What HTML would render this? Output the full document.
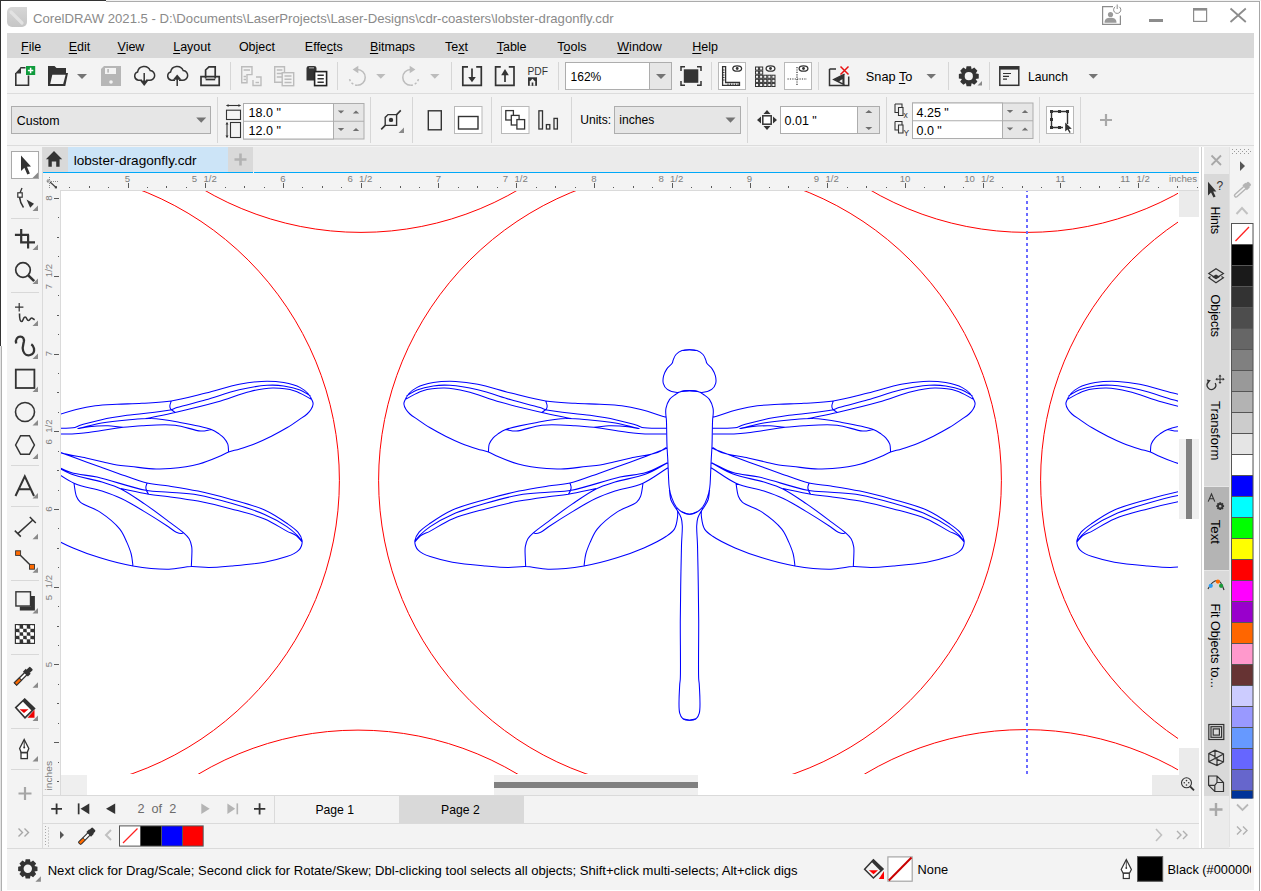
<!DOCTYPE html>
<html><head><meta charset="utf-8">
<style>
*{margin:0;padding:0;box-sizing:border-box}
html,body{width:1261px;height:891px;overflow:hidden;background:#fff;font-family:"Liberation Sans",sans-serif;font-size:13px;color:#000;position:relative}
.a{position:absolute}
.t{position:absolute;white-space:nowrap;line-height:1}
svg{position:absolute;overflow:visible}
.u{text-decoration:underline;text-underline-offset:1.5px;text-decoration-thickness:1px}
</style></head><body>
<div class="a" style="left:0px;top:0px;width:106px;height:1px;background:#333;"></div>
<div class="a" style="left:106px;top:0px;width:1155px;height:1px;background:#f2f2f2;"></div>
<div class="a" style="left:106px;top:1px;width:1154px;height:1px;background:#ababab;"></div>
<div class="a" style="left:0px;top:0px;width:1px;height:346px;background:#333;"></div>
<div class="a" style="left:0px;top:346px;width:1px;height:545px;background:#e4e4e4;"></div>
<div class="a" style="left:1px;top:346px;width:1px;height:545px;background:#b0b0b0;"></div>
<div class="a" style="left:1259px;top:1px;width:1px;height:890px;background:#a6a6a6;"></div>
<div class="t" style="left:33px;top:11.9px;font-size:13.15px;color:#8a8a8a;">CorelDRAW 2021.5 - D:\Documents\LaserProjects\Laser-Designs\cdr-coasters\lobster-dragonfly.cdr</div>
<div class="a" style="left:7px;top:33px;width:1247px;height:25px;background:#d8d8d8;"></div>
<div class="t" style="left:21.1px;top:40.6px;font-size:12.5px;color:#000;"><span class="u">F</span>ile</div>
<div class="t" style="left:68.7px;top:40.6px;font-size:12.5px;color:#000;"><span class="u">E</span>dit</div>
<div class="t" style="left:117.5px;top:40.6px;font-size:12.5px;color:#000;"><span class="u">V</span>iew</div>
<div class="t" style="left:173.2px;top:40.6px;font-size:12.5px;color:#000;"><span class="u">L</span>ayout</div>
<div class="t" style="left:238.9px;top:40.6px;font-size:12.5px;color:#000;">Ob<span class="u">j</span>ect</div>
<div class="t" style="left:304.8px;top:40.6px;font-size:12.5px;color:#000;">Effe<span class="u">c</span>ts</div>
<div class="t" style="left:369.9px;top:40.6px;font-size:12.5px;color:#000;"><span class="u">B</span>itmaps</div>
<div class="t" style="left:445px;top:40.6px;font-size:12.5px;color:#000;">Te<span class="u">x</span>t</div>
<div class="t" style="left:496.7px;top:40.6px;font-size:12.5px;color:#000;"><span class="u">T</span>able</div>
<div class="t" style="left:557.3px;top:40.6px;font-size:12.5px;color:#000;">T<span class="u">o</span>ols</div>
<div class="t" style="left:617.3px;top:40.6px;font-size:12.5px;color:#000;"><span class="u">W</span>indow</div>
<div class="t" style="left:692.3px;top:40.6px;font-size:12.5px;color:#000;"><span class="u">H</span>elp</div>
<div class="a" style="left:7px;top:58px;width:1247px;height:35px;background:#f3f3f3;"></div>
<div class="a" style="left:7px;top:93px;width:1247px;height:1px;background:#dcdcdc;"></div>
<div class="a" style="left:7px;top:94px;width:1247px;height:51px;background:#f3f3f3;"></div>
<div class="a" style="left:7px;top:145px;width:1247px;height:1px;background:#dcdcdc;"></div>
<div class="a" style="left:7px;top:146px;width:1247px;height:744px;background:#f3f3f3;"></div>
<div class="a" style="left:43px;top:147px;width:1156px;height:25px;background:#ebebeb;"></div>
<div class="a" style="left:43px;top:147px;width:25px;height:25px;background:#d9d9d9;"></div>
<div class="a" style="left:68px;top:147px;width:160px;height:25px;background:#cce4f7;"></div>
<div class="a" style="left:228px;top:147px;width:25px;height:25px;background:#d9d9d9;"></div>
<div class="a" style="left:43px;top:172px;width:1156px;height:1px;background:#00a8f8;"></div>
<div class="a" style="left:253px;top:172px;width:1px;height:1px;background:#f3f3f3;"></div>
<div class="a" style="left:42px;top:147px;width:1px;height:701px;background:#dadada;"></div>
<div class="a" style="left:43px;top:173px;width:1156px;height:17px;background:#f3f3f3;"></div>
<div class="a" style="left:43px;top:190px;width:1156px;height:1px;background:#dadada;"></div>
<div class="a" style="left:43px;top:173px;width:17px;height:622px;background:#f3f3f3;"></div>
<div class="a" style="left:60px;top:190px;width:1px;height:605px;background:#dadada;"></div>
<div class="a" style="left:61px;top:191px;width:1138px;height:604px;background:#fff;"></div>
<div class="a" style="left:1179px;top:191px;width:20px;height:26px;background:#ebebeb;"></div>
<div class="a" style="left:1179px;top:748px;width:20px;height:47px;background:#ebebeb;"></div>
<div class="a" style="left:1152px;top:775px;width:47px;height:20px;background:#ebebeb;"></div>
<div class="a" style="left:61px;top:775px;width:26px;height:20px;background:#efefef;"></div>
<div class="a" style="left:494px;top:775px;width:204px;height:20px;background:#efefef;"></div>
<div class="a" style="left:494px;top:782px;width:204px;height:6px;background:#808080;"></div>
<div class="a" style="left:1179px;top:439px;width:20px;height:80px;background:#efefef;"></div>
<div class="a" style="left:1186px;top:439px;width:6px;height:80px;background:#808080;"></div>
<div class="a" style="left:1199px;top:147px;width:5px;height:701px;background:#ffffff;"></div>
<div class="a" style="left:1201px;top:147px;width:1px;height:701px;background:#d0d0d0;"></div>
<div class="a" style="left:1204px;top:147px;width:25px;height:27px;background:#ebebeb;"></div>
<div class="a" style="left:1204px;top:174px;width:25px;height:622px;background:#d9d9d9;"></div>
<div class="a" style="left:1204px;top:487px;width:25px;height:83px;background:#b4b4b4;"></div>
<div class="a" style="left:1229px;top:147px;width:1px;height:700px;background:#e2e2e2;"></div>
<div class="a" style="left:43px;top:795px;width:1156px;height:1px;background:#dadada;"></div>
<div class="a" style="left:43px;top:796px;width:1156px;height:27px;background:#f3f3f3;"></div>
<div class="a" style="left:399px;top:796px;width:125px;height:27px;background:#d9d9d9;"></div>
<div class="a" style="left:274px;top:796px;width:1px;height:27px;background:#dadada;"></div>
<div class="a" style="left:43px;top:823px;width:1156px;height:1px;background:#dadada;"></div>
<div class="a" style="left:7px;top:848px;width:1247px;height:1px;background:#dadada;"></div>
<div class="a" style="left:1204px;top:796px;width:25px;height:52px;background:#ebebeb;"></div>
<div class="a" style="left:1230px;top:147px;width:24px;height:701px;background:#f3f3f3;"></div>
<div class="a" style="left:1204px;top:486px;width:25px;height:1px;background:#e6e6e6;"></div>
<div class="a" style="left:1204px;top:570px;width:25px;height:1px;background:#e6e6e6;"></div>
<!-- canvas -->

<svg width="1261" height="891" style="left:0;top:0" viewBox="0 0 1261 891">
<defs><clipPath id="cv"><rect x="61" y="191" width="1117" height="583"/></clipPath>
<g id="half"><path d="M696.0,350.6C693.8,350.3 691.7,349.8 689.5,349.8C687.1,349.8 684.3,349.8 682.0,350.6C679.8,351.4 677.5,352.9 676.0,354.5C674.6,356.0 673.8,358.4 673.2,360.0C672.7,361.1 672.9,361.9 672.3,363.0C671.3,364.8 668.2,366.9 666.7,369.1C665.3,371.2 664.2,373.5 663.6,375.9C663.0,378.3 662.7,381.0 663.3,383.3C663.9,385.5 665.3,387.9 667.3,389.4C669.7,391.2 674.3,392.3 677.2,392.4C679.4,392.5 681.0,391.3 683.0,391.0C685.1,390.7 687.3,390.6 689.5,390.6C691.7,390.6 693.8,390.9 696.0,391.0 M698.0,391.5C695.2,391.2 692.3,390.6 689.5,390.6C686.7,390.6 683.5,390.7 681.0,391.5C678.7,392.2 676.6,393.7 674.7,395.0C672.8,396.3 671.0,397.5 669.6,399.4C668.0,401.7 666.6,405.4 666.0,408.1C665.5,410.2 665.7,412.0 665.8,414.0C665.9,416.0 666.3,417.7 666.4,420.0C666.6,423.2 666.6,427.4 666.7,431.5C666.8,436.1 666.8,441.3 667.0,446.1C667.2,450.8 667.6,455.2 667.8,460.0C668.1,465.1 668.2,471.1 668.5,476.0C668.7,480.3 668.7,484.2 669.3,488.0C669.8,491.4 670.6,494.5 671.7,497.6C672.8,500.7 674.2,504.0 676.0,506.5C677.7,508.7 679.7,510.7 682.0,512.0C684.2,513.3 687.0,514.2 689.5,514.2C692.0,514.2 694.5,512.7 697.0,512.0 M669.4,490.0C669.9,493.2 669.9,496.6 670.8,499.5C671.6,502.1 673.2,504.4 674.5,506.5C675.6,508.3 676.9,509.7 678.0,511.5C679.2,513.5 680.5,515.7 681.2,518.0C682.0,520.5 682.1,522.8 682.3,526.0C682.5,531.0 681.7,537.7 681.5,545.0C681.2,554.9 681.0,567.9 680.8,580.0C680.6,592.9 680.4,605.4 680.3,620.0C680.2,637.8 680.8,669.5 680.3,679.0C680.1,682.0 679.8,682.3 679.7,685.0C679.4,690.9 678.2,707.5 679.7,713.2C680.4,715.9 681.4,717.6 683.0,718.8C684.6,720.0 687.3,720.2 689.5,720.2C691.7,720.2 693.8,719.3 696.0,718.8 M666.1,417.2C657.7,414.7 648.7,411.6 640.8,409.6C634.0,407.9 628.3,406.7 621.7,405.8C614.7,404.9 607.5,404.7 600.0,404.3C592.0,403.9 583.8,403.8 575.2,403.3C565.8,402.7 555.9,402.5 545.7,401.0C534.6,399.3 522.5,395.9 511.1,393.1C499.9,390.3 487.8,386.2 477.8,384.2C469.7,382.6 463.0,381.7 455.6,381.4C448.2,381.1 440.1,381.4 433.3,382.6C427.3,383.7 421.0,385.4 416.7,387.6C413.5,389.3 411.0,391.2 409.0,393.5C407.1,395.7 405.4,399.0 404.6,401.0C404.1,402.2 403.8,402.9 403.9,404.0C404.0,405.5 404.9,407.7 405.9,409.3C406.9,411.0 408.2,412.5 409.9,414.0C412.0,415.9 414.9,417.6 417.8,419.6C421.3,422.0 425.4,424.9 429.7,427.5C434.6,430.4 440.3,433.5 445.6,436.2C450.8,438.8 456.1,441.3 461.4,443.4C466.6,445.5 472.5,447.4 477.3,448.9C481.3,450.2 484.9,450.8 488.4,452.1C491.8,453.3 494.2,454.9 498.0,456.5C503.4,458.8 510.7,462.0 518.1,464.0C526.7,466.3 538.8,467.9 546.7,468.6C552.3,469.1 555.6,469.2 561.0,469.0C568.2,468.8 578.9,467.3 586.0,466.6C591.4,466.0 595.5,465.8 600.1,465.0C604.7,464.2 609.0,463.0 613.8,461.9C619.2,460.7 624.6,459.4 631.0,458.0C638.9,456.3 651.2,454.8 657.5,452.4C661.4,451.0 663.4,449.1 666.3,447.5 M666.1,428.3C658.1,428.0 646.8,428.5 642.0,427.4C639.9,426.9 639.7,426.2 637.6,425.5C633.1,423.9 623.1,421.4 615.4,419.7C607.3,417.9 599.6,416.7 590.0,415.3C577.5,413.5 554.7,411.9 546.7,410.0C543.5,409.2 543.1,408.5 540.1,407.6C533.9,405.6 521.1,402.6 511.1,399.8C500.4,396.7 488.5,392.3 477.8,389.8C468.2,387.6 458.1,385.8 450.0,385.3C443.7,384.9 438.8,385.1 433.3,385.9C427.8,386.7 421.7,388.1 417.0,390.0C413.0,391.6 410.0,394.0 406.5,396.0 M406.0,399.0C411.4,396.3 416.2,392.7 422.2,390.9C428.9,388.9 437.0,388.0 444.4,388.1C451.8,388.2 458.6,389.5 466.7,391.4C476.8,393.7 488.2,398.7 500.0,402.0C513.1,405.7 529.1,409.5 541.9,412.4C552.6,414.8 561.6,416.5 571.4,418.6 M545.7,401.0C546.2,402.5 547.0,404.1 547.1,405.5C547.2,406.6 547.1,407.7 546.5,408.7C545.7,410.0 543.4,411.2 541.9,412.4 M488.4,452.1C488.7,449.5 488.4,446.6 489.2,444.2C490.0,441.9 491.6,439.6 493.2,437.8C494.6,436.2 496.2,435.2 498.0,433.9C500.2,432.4 502.1,430.9 505.7,429.5C512.5,426.9 526.8,424.2 537.1,422.4C546.8,420.7 556.5,418.9 565.7,418.6C574.1,418.3 581.8,419.4 590.0,420.1C598.4,420.8 607.6,421.7 615.4,423.0C622.2,424.2 630.1,426.4 634.4,427.4C636.6,427.9 637.8,428.2 639.5,428.6 M505.7,429.5C509.2,430.0 511.9,431.2 516.2,431.0C522.9,430.7 532.7,426.2 541.9,425.2C552.2,424.1 565.7,425.2 575.2,425.7C582.3,426.0 587.9,427.2 593.8,427.2C599.1,427.2 603.6,425.9 609.0,425.8C615.0,425.7 622.5,426.1 628.0,426.7C632.3,427.2 635.7,428.0 639.5,428.6 M593.8,427.2C601.0,428.3 608.6,429.5 615.4,430.5C621.6,431.4 627.8,432.5 633.1,433.1C637.4,433.6 640.5,433.8 645.0,434.0C651.0,434.2 659.1,434.0 666.1,434.0 M667.0,448.0C665.1,448.9 663.8,449.6 661.2,450.6C656.4,452.6 647.3,455.8 640.0,458.5C632.2,461.4 623.0,464.7 615.8,467.3C610.0,469.4 606.2,470.8 600.1,472.9C591.7,475.8 579.3,480.9 570.0,483.1C562.2,484.9 555.8,484.9 548.0,486.1C539.0,487.5 529.0,489.0 519.0,491.1C508.2,493.4 496.8,496.3 485.7,499.4C474.5,502.6 462.2,505.6 452.4,510.0C444.0,513.8 436.2,519.1 430.2,523.3C425.7,526.4 421.7,529.0 419.1,532.2C417.0,534.8 415.3,538.0 414.9,540.5C414.6,542.5 415.0,544.3 415.6,546.0C416.2,547.6 417.0,549.0 418.2,550.2C419.5,551.5 421.2,552.6 423.0,553.6C425.1,554.8 427.1,555.6 430.2,556.6C435.5,558.4 444.2,560.7 452.4,562.2C462.3,564.0 475.7,565.1 485.7,566.0C493.8,566.7 500.9,567.4 507.9,567.5C514.2,567.6 519.4,566.4 525.7,566.6C532.7,566.8 539.7,569.2 548.0,569.3C558.6,569.5 572.3,568.0 584.0,566.0C595.3,564.1 606.6,561.0 616.9,557.8C626.4,554.9 635.4,551.7 643.9,548.0C651.8,544.5 660.9,540.1 666.3,536.3C669.9,533.8 672.5,532.1 674.4,529.1C676.4,525.9 677.1,520.7 677.5,517.4C677.8,515.0 677.9,512.9 677.5,511.2C677.2,509.9 676.5,509.1 676.0,508.0 M667.3,462.7C660.2,466.0 653.6,470.2 646.0,472.6C637.9,475.1 629.9,474.9 620.0,477.1C606.3,480.1 584.9,487.8 571.5,490.2C562.3,491.8 556.2,491.5 548.0,492.2C538.8,493.0 528.9,493.3 519.0,495.0C508.2,496.9 496.7,500.1 485.7,503.3C474.5,506.5 462.2,510.1 452.4,514.4C444.1,518.0 436.0,522.6 430.2,526.6C426.0,529.5 422.6,532.4 420.0,535.0C418.1,536.9 417.0,538.7 415.5,540.5 M415.2,541.6C417.0,539.7 418.3,537.5 420.5,535.8C423.1,533.9 426.3,533.1 430.2,531.1C436.1,528.0 444.0,522.4 452.4,518.9C462.2,514.8 474.6,511.9 485.7,508.9C496.8,505.9 508.2,503.2 519.0,501.1C529.0,499.2 539.2,497.9 548.0,496.7C555.4,495.7 561.1,495.4 568.4,494.2C577.0,492.8 586.9,490.5 596.1,488.6 M570.0,483.1C570.4,484.4 571.0,485.7 571.1,487.0C571.2,488.2 570.9,489.4 570.5,490.5C570.1,491.8 569.1,493.0 568.4,494.2 M667.3,463.0C660.2,466.7 654.0,471.0 646.0,474.0C636.8,477.5 624.0,479.3 615.0,482.1C608.0,484.3 602.9,485.6 596.5,488.7C588.7,492.5 580.1,498.7 572.1,504.1C564.1,509.5 555.5,516.1 548.6,521.3C543.0,525.5 537.3,529.3 533.6,532.7C531.1,534.9 529.3,536.5 527.9,538.8C526.5,541.1 525.8,543.8 525.3,546.6C524.8,549.6 525.1,552.8 525.2,556.0C525.3,559.4 525.5,563.1 525.7,566.6 M667.9,467.8C659.6,472.9 651.8,479.3 643.0,483.2C634.2,487.1 623.4,488.3 615.0,491.1C607.9,493.5 602.3,495.5 595.7,498.6C588.1,502.2 579.9,507.2 572.1,511.9C564.2,516.6 554.3,523.0 548.6,526.8C545.2,529.0 543.2,531.2 540.7,532.3C538.8,533.1 536.5,533.7 535.2,533.5C534.5,533.4 534.1,533.0 533.6,532.7 M643.0,483.5C642.2,487.8 641.9,493.2 640.5,496.5C639.5,498.9 638.8,500.3 636.7,502.2C632.9,505.6 623.2,507.9 616.9,512.1C610.0,516.7 601.8,523.3 597.2,529.1C593.7,533.5 592.0,538.2 590.0,542.6C588.3,546.5 586.8,550.1 585.8,554.0C584.8,557.9 584.6,562.0 584.0,566.0"/></g>
<g id="df"><use href="#half"/><use href="#half" transform="matrix(-1,0,0,1,1379,0)"/></g></defs>
<g clip-path="url(#cv)">
<g fill="none" stroke="#ff0000" stroke-width="1">
<circle cx="690" cy="480.3" r="311.4"/><circle cx="28" cy="480.3" r="311.4"/><circle cx="1352" cy="480.3" r="311.4"/>
<circle cx="361" cy="-79" r="311.4"/><circle cx="1027" cy="-79" r="311.4"/>
<circle cx="358" cy="1041.5" r="311.4"/><circle cx="1025" cy="1041" r="311.4"/>
</g>
<g fill="none" stroke="#0000ff" stroke-width="1.05">
<use href="#df"/><use href="#df" transform="translate(-662,0)"/><use href="#df" transform="translate(662,0)"/>
</g>
<line x1="1027" y1="189" x2="1027" y2="774" stroke="#6b6bff" stroke-width="2" stroke-dasharray="3 3"/>
</g>
</svg>
<svg width="1261" height="891" style="left:0;top:0" viewBox="0 0 1261 891"><defs><linearGradient id="gi" x1="0" y1="0" x2="0" y2="1"><stop offset="0" stop-color="#d6d6d6"/><stop offset="1" stop-color="#c6c6c6"/></linearGradient></defs>
<path d="M12,7 H27 V22 A5,5 0 0 1 22,27 H12 A5,5 0 0 1 7,22 V12 A5,5 0 0 1 12,7 Z" fill="url(#gi)"/>
<path d="M11,12 L22,23" stroke="#e2e2e2" stroke-width="3.2" stroke-linecap="round"/>
<g stroke="#8c8c8c" fill="none" stroke-width="1.2"><path d="M1113,6.6 H1102.6 V24.4 H1120.4 V15.5"/><path d="M1115.2,6.8 A3.6,3.6 0 1 0 1119.2,6.8" stroke-width="1"/><path d="M1117.2,4.5 V9" stroke-width="1"/></g>
<circle cx="1110.5" cy="14.5" r="2.6" fill="#9a9a9a"/><path d="M1104.5,22.8 C1104.5,19 1107,17.8 1110.5,17.8 C1114,17.8 1116.5,19 1116.5,22.8 Z" fill="#9a9a9a"/>
<rect x="1149" y="19" width="14" height="3" fill="#8c8c8c"/>
<rect x="1193.6" y="8.6" width="13" height="12.8" fill="none" stroke="#8c8c8c" stroke-width="1.2"/><rect x="1193" y="8" width="14" height="2.6" fill="#8c8c8c"/>
<path d="M1230.5,8.5 L1245.8,22 M1245.8,8.5 L1230.5,22" stroke="#8c8c8c" stroke-width="1.8"/>
<g fill="none" stroke="#333" stroke-width="1.6"><path d="M15.8,73 V85.2 H28.5 V75.5 M20.5,67.8 H25.5"/></g>
<path d="M15,73.5 L21,67 L21,73.5 Z" fill="#333"/>
<rect x="26" y="66" width="9.2" height="9" fill="#0f9b3c"/><path d="M30.6,67.8 V73.2 M27.9,70.5 H33.3" stroke="#fff" stroke-width="1.5"/>
<path d="M48,66 H54.5 L56.5,68 H66 V73 H68 L65.3,86 H48 Z" fill="#333"/>
<path d="M52.3,74.8 H65.6 L63.2,84 H50.2 Z" fill="#f3f3f3"/>
<path d="M77,74 H87 L82,79 Z" fill="#747474"/>
<path d="M104,66 H121 V86 H101 V69 Z" fill="#b6b6b6"/><rect x="105" y="68" width="11" height="6" fill="#f3f3f3"/><rect x="107.3" y="69" width="1.6" height="3.6" fill="#b6b6b6"/><circle cx="111" cy="82" r="1.8" fill="#f3f3f3"/>
<g fill="none" stroke="#333" stroke-width="1.5"><path d="M142,80.3 H138.3 A4.3,4.3 0 0 1 137.6,72 A6.6,6.6 0 0 1 150.2,70.5 A4.6,4.6 0 0 1 149.3,80.3 H146"/><path d="M175,80.3 H171.3 A4.3,4.3 0 0 1 170.6,72 A6.6,6.6 0 0 1 183.2,70.5 A4.6,4.6 0 0 1 182.3,80.3 H179"/><path d="M144.2,73 V82"/><path d="M177.2,77 V86"/></g>
<path d="M140,80.5 H148.4 L144.2,86 Z" fill="#333"/><path d="M172.8,79.8 H181.6 L177.2,74.5 Z" fill="#333"/>
<g fill="none" stroke="#333" stroke-width="1.7"><path d="M201,76.7 H219.2 V85.3 H201 Z"/><path d="M205.6,78.5 V70 L209,66.8 H215.2 V78.5"/><path d="M205.6,79.5 H215.2"/></g>
<rect x="230" y="62" width="1" height="28" fill="#d6d6d6"/>
<rect x="337" y="62" width="1" height="28" fill="#d6d6d6"/>
<rect x="451" y="62" width="1" height="28" fill="#d6d6d6"/>
<rect x="558" y="62" width="1" height="28" fill="#d6d6d6"/>
<rect x="711" y="62" width="1" height="28" fill="#d6d6d6"/>
<rect x="818" y="62" width="1" height="28" fill="#d6d6d6"/>
<rect x="948" y="62" width="1" height="28" fill="#d6d6d6"/>
<rect x="989" y="62" width="1" height="28" fill="#d6d6d6"/>
<g fill="none" stroke="#bcbcbc" stroke-width="1.4"><path d="M241.7,66.7 H252 V74.6 H247 V82.8 H241.7 Z"/><path d="M243.6,70 H250 M243.6,76.5 H246 M243.6,79.5 H246"/><path d="M253,80 V85.5 H261 V77 H256"/><path d="M255.5,82.5 H259"/><path d="M274.7,66.7 H284.5 V82.3 H274.7 Z"/><path d="M276.8,70 H282.4 M276.8,73.5 H282.4 M276.8,77 H282.4"/><rect x="282.2" y="72.7" width="11.5" height="13" fill="#f3f3f3"/><path d="M284.5,76 H291.5 M284.5,79.3 H291.5 M284.5,82.5 H291.5"/></g>
<path d="M306.5,68 Q306.5,66 309,66 H314 Q316.5,66 316.5,68 V80.5 H306.5 Z" fill="#333"/><rect x="309" y="67" width="5" height="1.6" fill="#888"/>
<rect x="314.6" y="71.6" width="12" height="14" fill="#fff" stroke="#222" stroke-width="1.6"/><path d="M317.5,75.2 H323.8 M317.5,78.7 H323.8 M317.5,82.2 H323.8" stroke="#333" stroke-width="1.6"/>
<g fill="none" stroke="#bcbcbc" stroke-width="1.5"><path d="M357.3,69.5 A7.9,7.9 0 0 1 357.3,85.3"/><path d="M357.3,85.3 A7.9,7.9 0 0 1 349.4,77.4" stroke-dasharray="2.2 2"/><path d="M410.7,69.5 A7.9,7.9 0 0 0 410.7,85.3"/><path d="M410.7,85.3 A7.9,7.9 0 0 0 418.6,77.4" stroke-dasharray="2.2 2"/></g>
<path d="M358.3,65.8 V73.2 L352.6,69.5 Z" fill="#bcbcbc"/><path d="M409.7,65.8 V73.2 L415.4,69.5 Z" fill="#bcbcbc"/>
<path d="M376.2,74 H385.5 L380.8,78.8 Z" fill="#bcbcbc"/><path d="M430.2,74 H439.5 L434.8,78.8 Z" fill="#bcbcbc"/>
<g fill="none" stroke="#333" stroke-width="1.7"><path d="M468,66.8 H462.8 V85.3 H481.3 V66.8 H476.2"/><path d="M472,68.5 V78"/><path d="M500.8,66.8 H495.6 V85.3 H514 V66.8 H508.8"/><path d="M505,75 V82"/></g>
<path d="M468.2,77 H475.8 L472,82.3 Z" fill="#333"/><path d="M501.2,75.3 H508.8 L505,69 Z" fill="#333"/>
<text x="527.5" y="74.8" font-family="Liberation Sans" font-size="10.6" fill="#333" textLength="20.5" lengthAdjust="spacingAndGlyphs">PDF</text>
<rect x="528" y="77.3" width="9" height="8.5" fill="#333"/><path d="M529.8,81.5 L532.5,78.8 L535.2,81.5 V85.8 H529.8 Z" fill="#f3f3f3"/><rect x="531.7" y="82.5" width="1.6" height="3.3" fill="#333"/>
<rect x="565.5" y="62.5" width="106" height="27" fill="#fff" stroke="#adadad"/><rect x="649.5" y="62.5" width="22" height="27" fill="#e6e6e6" stroke="#adadad"/><path d="M656,74 H666 L661,79 Z" fill="#747474"/>
<g fill="none" stroke="#333" stroke-width="1.5"><path d="M681,71 V66.8 H685 M697,66.8 H701 V71 M701,81 V85.2 H697 M685,85.2 H681 V81"/></g><rect x="683.8" y="69.3" width="14.5" height="13.5" fill="#333"/>
<rect x="718.5" y="62.5" width="27" height="27" fill="#fff" stroke="#b9b9b9"/><rect x="784.5" y="62.5" width="27" height="27" fill="#fff" stroke="#b9b9b9"/>
<path d="M722.6,66.6 H725.6 V82.5 H739.5 V85.4 H722.6 Z" fill="none" stroke="#333" stroke-width="1.3"/>
<path d="M723,70 H724.5 M723,72.5 H724.5 M723,75 H724.5 M723,77.5 H724.5 M723,80 H724.5 M728,85 V83.5 M730.5,85 V83.5 M733,85 V83.5 M735.5,85 V83.5 M738,85 V83.5" stroke="#333" stroke-width="0.9"/>
<ellipse cx="737.2" cy="68.5" rx="4.4" ry="2.7" fill="#fff" stroke="#333" stroke-width="1.3"/><circle cx="737.2" cy="68.5" r="1.4" fill="#333"/>
<g fill="#333"><rect x="755.0" y="66.5" width="4.1" height="4.1"/><rect x="759.1" y="66.5" width="4.1" height="4.1"/><rect x="755.0" y="70.6" width="4.1" height="4.1"/><rect x="759.1" y="70.6" width="4.1" height="4.1"/><rect x="755.0" y="74.7" width="4.1" height="4.1"/><rect x="759.1" y="74.7" width="4.1" height="4.1"/><rect x="763.2" y="74.7" width="4.1" height="4.1"/><rect x="767.3" y="74.7" width="4.1" height="4.1"/><rect x="771.4" y="74.7" width="4.1" height="4.1"/><rect x="755.0" y="78.8" width="4.1" height="4.1"/><rect x="759.1" y="78.8" width="4.1" height="4.1"/><rect x="763.2" y="78.8" width="4.1" height="4.1"/><rect x="767.3" y="78.8" width="4.1" height="4.1"/><rect x="771.4" y="78.8" width="4.1" height="4.1"/><rect x="755.0" y="82.9" width="4.1" height="4.1"/><rect x="759.1" y="82.9" width="4.1" height="4.1"/><rect x="763.2" y="82.9" width="4.1" height="4.1"/><rect x="767.3" y="82.9" width="4.1" height="4.1"/><rect x="771.4" y="82.9" width="4.1" height="4.1"/></g>
<g fill="#f3f3f3"><rect x="756.0" y="67.5" width="2.1" height="2.1"/><rect x="760.1" y="67.5" width="2.1" height="2.1"/><rect x="756.0" y="71.6" width="2.1" height="2.1"/><rect x="760.1" y="71.6" width="2.1" height="2.1"/><rect x="756.0" y="75.7" width="2.1" height="2.1"/><rect x="760.1" y="75.7" width="2.1" height="2.1"/><rect x="764.2" y="75.7" width="2.1" height="2.1"/><rect x="768.3" y="75.7" width="2.1" height="2.1"/><rect x="772.4" y="75.7" width="2.1" height="2.1"/><rect x="756.0" y="79.8" width="2.1" height="2.1"/><rect x="760.1" y="79.8" width="2.1" height="2.1"/><rect x="764.2" y="79.8" width="2.1" height="2.1"/><rect x="768.3" y="79.8" width="2.1" height="2.1"/><rect x="772.4" y="79.8" width="2.1" height="2.1"/><rect x="756.0" y="83.9" width="2.1" height="2.1"/><rect x="760.1" y="83.9" width="2.1" height="2.1"/><rect x="764.2" y="83.9" width="2.1" height="2.1"/><rect x="768.3" y="83.9" width="2.1" height="2.1"/><rect x="772.4" y="83.9" width="2.1" height="2.1"/></g>
<ellipse cx="770.5" cy="68.5" rx="4.4" ry="2.7" fill="#fff" stroke="#333" stroke-width="1.3"/><circle cx="770.5" cy="68.5" r="1.4" fill="#333"/>
<path d="M797,67 V86 M787.5,79 H807" stroke="#333" stroke-width="1.2" stroke-dasharray="1.2 1.2"/>
<ellipse cx="803.5" cy="68.5" rx="4.4" ry="2.7" fill="#fff" stroke="#333" stroke-width="1.3"/><circle cx="803.5" cy="68.5" r="1.4" fill="#333"/>
<path d="M829.5,69 V85.5 H848.7 V76.5 M829.5,69 H836" fill="none" stroke="#333" stroke-width="1.5"/><path d="M844.5,74 L833.5,79.5 L844.5,85 M843,78 V84 L838,81.3 Z" fill="#333" stroke="#333" stroke-width="1.2"/>
<path d="M840.5,66.5 L848.5,74.5 M848.5,66.5 L840.5,74.5" stroke="#e81010" stroke-width="1.5"/>
<path d="M926.5,74 H936 L931.2,78.8 Z" fill="#747474"/>
<path d="M978.75,73.97 L978.75,78.43 L975.62,79.08 L975.66,78.98 L977.41,81.66 L974.26,84.81 L971.58,83.06 L971.68,83.02 L971.03,86.15 L966.57,86.15 L965.92,83.02 L966.02,83.06 L963.34,84.81 L960.19,81.66 L961.94,78.98 L961.98,79.08 L958.85,78.43 L958.85,73.97 L961.98,73.32 L961.94,73.42 L960.19,70.74 L963.34,67.59 L966.02,69.34 L965.92,69.38 L966.57,66.25 L971.03,66.25 L971.68,69.38 L971.58,69.34 L974.26,67.59 L977.41,70.74 L975.66,73.42 L975.62,73.32Z M972.9,76.2 A4.1,4.1 0 1 0 964.6999999999999,76.2 A4.1,4.1 0 1 0 972.9,76.2Z" fill="#333" fill-rule="evenodd"/>
<path d="M982,85.5 H977.5 L982,81 Z" fill="#8a8a8a"/>
<rect x="999.8" y="66.8" width="19" height="18.5" fill="none" stroke="#333" stroke-width="1.5"/><rect x="999.8" y="66.8" width="19" height="2.8" fill="#333"/><path d="M1003,73.5 H1011 M1003,76.3 H1009 M1003,79.2 H1007" stroke="#333" stroke-width="1.2"/>
<path d="M1088.6,74 H1098 L1093.3,78.8 Z" fill="#747474"/>
<rect x="11.5" y="106.5" width="199" height="27" fill="#e6e6e6" stroke="#adadad"/><path d="M196.2,117.6 H206.2 L201.2,122.8 Z" fill="#747474"/>
<rect x="217" y="97" width="1" height="46" fill="#d6d6d6"/>
<rect x="370" y="97" width="1" height="46" fill="#d6d6d6"/>
<rect x="412" y="97" width="1" height="46" fill="#d6d6d6"/>
<rect x="491" y="97" width="1" height="46" fill="#d6d6d6"/>
<rect x="571" y="97" width="1" height="46" fill="#d6d6d6"/>
<rect x="747" y="97" width="1" height="46" fill="#d6d6d6"/>
<rect x="886" y="97" width="1" height="46" fill="#d6d6d6"/>
<rect x="1039" y="97" width="1" height="46" fill="#d6d6d6"/>
<rect x="1080" y="97" width="1" height="46" fill="#d6d6d6"/>
<g fill="none" stroke="#333" stroke-width="1.1"><rect x="226.5" y="110.2" width="14" height="9.3"/><path d="M226.5,105.5 H240.5"/><rect x="230.5" y="122.5" width="10" height="15"/><path d="M227,122.5 V137.5"/></g>
<path d="M226.3,105.5 L228.5,104 V107 Z M240.7,105.5 L238.5,104 V107 Z M227,122.3 L225.5,124.5 H228.5 Z M227,137.7 L225.5,135.5 H228.5 Z" fill="#333"/>
<rect x="243.5" y="103.5" width="120.5" height="35.5" fill="#e6e6e6" stroke="#adadad"/><rect x="243.5" y="103.5" width="90" height="35.5" fill="#fff" stroke="#adadad"/><path d="M243.5,121.25 H364.0" stroke="#adadad"/><path d="M337.8,110.5 H344.2 L341,113.5 Z M352.8,113.5 H359.2 L356,110.5 Z" fill="#707070"/><path d="M337.8,128.0 H344.2 L341,131.0 Z M352.8,131.0 H359.2 L356,128.0 Z" fill="#707070"/>
<rect x="912.5" y="103.0" width="120.5" height="35.5" fill="#e6e6e6" stroke="#adadad"/><rect x="912.5" y="103.0" width="90" height="35.5" fill="#fff" stroke="#adadad"/><path d="M912.5,120.75 H1033.0" stroke="#adadad"/><path d="M1006.8,110.0 H1013.2 L1010,113.0 Z M1021.8,113.0 H1028.2 L1025,110.0 Z" fill="#707070"/><path d="M1006.8,127.5 H1013.2 L1010,130.5 Z M1021.8,130.5 H1028.2 L1025,127.5 Z" fill="#707070"/>
<path d="M388,114.6 H396.6 V125.4 H385.2 V117.4 Z" fill="none" stroke="#333" stroke-width="1.4"/><circle cx="391" cy="119.9" r="2.2" fill="#333"/><path d="M381.2,129.4 L385.2,125.4 M396.6,114.6 L400.8,110.4" stroke="#333" stroke-width="1.6"/><path d="M404,127.5 V133 H398.5 Z" fill="#8a8a8a"/>
<rect x="428.3" y="110.8" width="13" height="19" fill="none" stroke="#333" stroke-width="1.4"/>
<rect x="454.5" y="106.5" width="27.5" height="27" fill="#fff" stroke="#b9b9b9"/><rect x="501.5" y="106.5" width="27.5" height="27" fill="#fff" stroke="#b9b9b9"/><rect x="1046.5" y="106.5" width="27" height="27" fill="#fff" stroke="#b9b9b9"/>
<rect x="458.5" y="116.5" width="19.5" height="12.5" fill="none" stroke="#333" stroke-width="1.4"/>
<g stroke="#333" stroke-width="1.3"><rect x="505.8" y="110.6" width="7.6" height="9.4" fill="#fff"/><rect x="511.3" y="115.4" width="7.8" height="9.6" fill="#fff"/><rect x="516.9" y="119.6" width="7.7" height="9.4" fill="#fff"/></g>
<g fill="none" stroke="#333" stroke-width="1.3"><rect x="538.9" y="110.8" width="3.6" height="18.2"/><rect x="546.4" y="124.6" width="3.4" height="4.4"/><rect x="554" y="118.4" width="3.4" height="10.6"/></g>
<path d="M1106,114 V126 M1100,120 H1112" stroke="#a8a8a8" stroke-width="2.2"/>
<rect x="614.5" y="106.5" width="126" height="27" fill="#e6e6e6" stroke="#adadad"/><path d="M725.5,117.6 H735.5 L730.5,122.8 Z" fill="#747474"/>
<path d="M767,110 L770.5,114 H763.5 Z M767,130 L770.5,126 H763.5 Z M757,120 L761,116.5 V123.5 Z M777,120 L773,116.5 V123.5 Z" fill="#333"/><rect x="762.8" y="115.8" width="8.4" height="8.4" fill="#fff" stroke="#333" stroke-width="1.5"/>
<rect x="780.5" y="106.5" width="99" height="27" fill="#e6e6e6" stroke="#adadad"/><rect x="780.5" y="106.5" width="77" height="27" fill="#fff" stroke="#adadad"/><path d="M865.3,113 H872.3 L868.8,110 Z M865.3,127 H872.3 L868.8,130 Z" fill="#707070"/>
<g fill="none" stroke="#333" stroke-width="1.1"><path d="M895,104 H902 V107.5 M895,104 V112.5 H898.5"/><path d="M898.5,107.5 H903 V115.5 H898.5 Z"/><path d="M895,121.5 H902 V125 M895,121.5 V130 H898.5"/><path d="M898.5,125 H903 V133 H898.5 Z"/></g>
<text x="903.5" y="117.8" font-family="Liberation Sans" font-size="8.5" fill="#333">x</text><text x="903.5" y="135.5" font-family="Liberation Sans" font-size="8.5" fill="#333">Y</text>
<path d="M1051.5,111.5 H1067.5 V124 M1051.5,111.5 V127.5 H1063" fill="none" stroke="#333" stroke-width="1.4"/><g fill="#333"><rect x="1050" y="110" width="3" height="3"/><rect x="1058" y="110" width="3" height="3"/><rect x="1066" y="110" width="3" height="3"/><rect x="1050" y="118" width="3" height="3"/><rect x="1050" y="126" width="3" height="3"/><rect x="1058" y="126" width="3" height="3"/></g><path d="M1065.2,122.5 V131.5 L1067.5,129.5 L1069.5,133 L1070.7,132.3 L1068.8,129 L1071.8,128.8 Z" fill="#333"/></svg>
<svg width="1261" height="891" style="left:0;top:0" viewBox="0 0 1261 891"><rect x="11.5" y="151.5" width="27" height="27" fill="#fff" stroke="#a9a9a9"/>
<path d="M21,155.5 V171 L24.4,167.8 L27.3,174.6 L29.9,173.4 L27,166.8 L31,166.4 Z" fill="#333"/>
<path d="M38,172.5 V178 H32.5 Z" fill="#8a8a8a"/>
<path d="M22,188 Q16.5,197.5 23.5,207.5" fill="none" stroke="#333" stroke-width="1.4"/><rect x="17.8" y="192.8" width="4.4" height="4.4" fill="#fff" stroke="#333" stroke-width="1.2"/><path d="M26.5,199.5 L34,203.8 L30.2,207.8 Z" fill="#333"/>
<path d="M38,205.5 V211 H32.5 Z" fill="#8a8a8a"/>
<rect x="11" y="218" width="28" height="1" fill="#d8d8d8"/>
<rect x="11" y="292" width="28" height="1" fill="#d8d8d8"/>
<rect x="11" y="465" width="28" height="1" fill="#d8d8d8"/>
<rect x="11" y="506" width="28" height="1" fill="#d8d8d8"/>
<rect x="11" y="580" width="28" height="1" fill="#d8d8d8"/>
<rect x="11" y="654" width="28" height="1" fill="#d8d8d8"/>
<rect x="11" y="728" width="28" height="1" fill="#d8d8d8"/>
<rect x="11" y="769" width="28" height="1" fill="#d8d8d8"/>
<path d="M14.9,234.8 H29 M21.2,229 V242.3 H35 M28.1,234.8 V248.6" fill="none" stroke="#333" stroke-width="2.2"/>
<path d="M38,244.5 V250 H32.5 Z" fill="#8a8a8a"/>
<circle cx="23" cy="270" r="7.3" fill="none" stroke="#333" stroke-width="1.7"/><path d="M28.3,275.3 L34.2,281.2" stroke="#333" stroke-width="2.6"/>
<path d="M38,278.5 V284 H32.5 Z" fill="#8a8a8a"/>
<path d="M19.2,303 V311.5 M15,307.2 H23.4" stroke="#333" stroke-width="1.2"/><path d="M19.5,313.5 C19.5,318 20,321.5 21.5,321.5 C23.5,321.5 23,317 25,317 C27,317 26.5,320.5 28.5,320.5 C30.3,320.5 30,318 31.5,318 C33,318 33.5,319.5 34.8,319.5" fill="none" stroke="#333" stroke-width="1.6"/>
<path d="M38,320.5 V326 H32.5 Z" fill="#8a8a8a"/>
<path d="M16.2,343.5 C15,339 17.8,336.5 20.4,336.6 C23,336.7 24.5,339 23.8,342 C23,345 22,347.5 23.2,351 C24.4,354.5 27.5,355.8 30.2,355 C33,354.2 34.5,351.5 34,348.5 C33.6,346.5 32.5,345 31.3,344.2" fill="none" stroke="#333" stroke-width="2.3"/>
<path d="M38,353.5 V359 H32.5 Z" fill="#8a8a8a"/>
<rect x="15.8" y="369.6" width="18.6" height="18.4" fill="none" stroke="#333" stroke-width="1.8"/>
<path d="M38,386.5 V392 H32.5 Z" fill="#8a8a8a"/>
<circle cx="25" cy="412" r="9.5" fill="none" stroke="#333" stroke-width="1.6"/>
<path d="M38,420.0 V425.5 H32.5 Z" fill="#8a8a8a"/>
<path d="M15.6,445 L20.6,435.7 H29.4 L34.4,445 L29.4,454.3 H20.6 Z" fill="none" stroke="#333" stroke-width="1.5"/>
<path d="M38,453.5 V459 H32.5 Z" fill="#8a8a8a"/>
<path d="M15.5,496 L24.8,476.3 L34,496 M18.6,489.2 H31" fill="none" stroke="#333" stroke-width="2"/>
<path d="M38,493.0 V498.5 H32.5 Z" fill="#8a8a8a"/>
<path d="M17.8,533.6 L32.8,520 M14.8,530.6 L20.8,536.6 M29.8,517 L35.8,523" fill="none" stroke="#333" stroke-width="1.5"/>
<path d="M38,533.7 V539.2 H32.5 Z" fill="#8a8a8a"/>
<path d="M18,553 L32,566.8" stroke="#333" stroke-width="1.5"/><rect x="15.6" y="550.8" width="5" height="4.6" fill="#ff6a00" stroke="#333" stroke-width="0.9"/><rect x="29.5" y="564.4" width="5" height="4.8" fill="#ff6a00" stroke="#333" stroke-width="0.9"/>
<path d="M38,567.2 V572.7 H32.5 Z" fill="#8a8a8a"/>
<path d="M31,596 H34.9 V610.6 H19.8 V606.4 H31 Z" fill="#333"/><rect x="15.9" y="591.8" width="14.6" height="14.2" fill="#f3f3f3" stroke="#333" stroke-width="1.4"/>
<path d="M38,608.0 V613.5 H32.5 Z" fill="#8a8a8a"/>
<rect x="14.8" y="624" width="20.2" height="20" fill="#333"/>
<g fill="#f3f3f3"><rect x="16.0" y="625.3" width="1.8" height="1.75"/><rect x="23.2" y="625.3" width="1.8" height="1.75"/><rect x="30.4" y="625.3" width="1.8" height="1.75"/><rect x="19.6" y="628.8" width="1.8" height="1.75"/><rect x="26.8" y="628.8" width="1.8" height="1.75"/><rect x="16.0" y="632.3" width="1.8" height="1.75"/><rect x="23.2" y="632.3" width="1.8" height="1.75"/><rect x="30.4" y="632.3" width="1.8" height="1.75"/><rect x="19.6" y="635.8" width="1.8" height="1.75"/><rect x="26.8" y="635.8" width="1.8" height="1.75"/><rect x="16.0" y="639.3" width="1.8" height="1.75"/><rect x="23.2" y="639.3" width="1.8" height="1.75"/><rect x="30.4" y="639.3" width="1.8" height="1.75"/></g>
<g fill="#fff"><rect x="16.0" y="625.3" width="3.6" height="3.5"/><rect x="23.2" y="625.3" width="3.6" height="3.5"/><rect x="30.4" y="625.3" width="3.6" height="3.5"/><rect x="19.6" y="628.8" width="3.6" height="3.5"/><rect x="26.8" y="628.8" width="3.6" height="3.5"/><rect x="16.0" y="632.3" width="3.6" height="3.5"/><rect x="23.2" y="632.3" width="3.6" height="3.5"/><rect x="30.4" y="632.3" width="3.6" height="3.5"/><rect x="19.6" y="635.8" width="3.6" height="3.5"/><rect x="26.8" y="635.8" width="3.6" height="3.5"/><rect x="16.0" y="639.3" width="3.6" height="3.5"/><rect x="23.2" y="639.3" width="3.6" height="3.5"/><rect x="30.4" y="639.3" width="3.6" height="3.5"/></g>
<g transform="translate(15.5,684) rotate(-45)"><rect x="0" y="-1.6" width="15" height="3.2" fill="#fff" stroke="#333" stroke-width="1.3"/><rect x="0" y="-1.6" width="7" height="3.2" fill="#ff6a00" stroke="#333" stroke-width="1"/><rect x="14" y="-3.5" width="4" height="7" fill="#333"/><rect x="17.5" y="-2.3" width="5" height="4.6" rx="1" fill="#333"/></g>
<path d="M38,682.2 V687.7 H32.5 Z" fill="#8a8a8a"/>
<path d="M24.7,699 L34.5,708.4 L25,717.8 L15.7,707.6 Z" fill="#fff" stroke="#333" stroke-width="1.6"/><path d="M24.7,698.6 L34.8,708.4 L32,711 L22.5,701.3 Z" fill="#333"/><path d="M19.5,709.3 H28.5 L24,713 Z" fill="#e00"/><path d="M34.5,709.8 V717.8 H27.5 Z" fill="#e00"/>
<path d="M38,715.5 V721 H32.5 Z" fill="#8a8a8a"/>
<path d="M24.2,739.5 L28.8,748.5 L27.2,752.5 H21.2 L19.6,748.5 Z" fill="#fff" stroke="#333" stroke-width="1.3"/><path d="M24.2,740 V747" stroke="#333" stroke-width="1"/><circle cx="24.2" cy="747.5" r="1" fill="#333"/><rect x="21" y="752.8" width="6.4" height="5.8" fill="#fff" stroke="#333" stroke-width="1.3"/>
<path d="M38,755.9 V761.4 H32.5 Z" fill="#8a8a8a"/>
<path d="M25,787 V800 M18.5,793.5 H31.5" stroke="#a6a6a6" stroke-width="2.2"/>
<path d="M18.5,828.5 L22.5,832.5 L18.5,836.5 M24.5,828.5 L28.5,832.5 L24.5,836.5" fill="none" stroke="#a6a6a6" stroke-width="1.4"/>
<path d="M45.9,159.2 L54,151 L62.2,159.2 H59.6 V166.8 H56.2 V161.6 H51.8 V166.8 H48.4 V159.2 Z" fill="#333"/>
<path d="M240.5,153.5 V165.5 M234.5,159.5 H246.5" stroke="#b2b2b2" stroke-width="2.6"/>
<g fill="#8a8a8a"><rect x="49" y="177" width="1" height="1"/><rect x="49" y="179" width="1" height="1"/><rect x="49" y="183" width="1" height="1"/><rect x="49" y="185" width="1" height="1"/><rect x="49" y="187" width="1" height="1"/><rect x="47" y="181" width="1" height="1"/><rect x="51" y="181" width="1" height="1"/><rect x="53" y="181" width="1" height="1"/><rect x="55" y="181" width="1" height="1"/><rect x="57" y="181" width="1" height="1"/></g><path d="M48,179 V183 M46.5,181 H50.5" stroke="#8a8a8a" stroke-width="1"/><path d="M50,182 L55.8,187.3" stroke="#444" stroke-width="1.2"/><rect x="54.8" y="186.2" width="2.2" height="2.2" fill="#444"/>
<g fill="#5a5a5a"><rect x="69" y="187" width="1" height="1"/><rect x="89" y="186" width="1" height="2"/><rect x="108" y="187" width="1" height="1"/><rect x="128" y="183" width="1" height="5"/><rect x="147" y="187" width="1" height="1"/><rect x="166" y="186" width="1" height="2"/><rect x="186" y="187" width="1" height="1"/><rect x="205" y="183" width="1" height="5"/><rect x="225" y="187" width="1" height="1"/><rect x="244" y="186" width="1" height="2"/><rect x="264" y="187" width="1" height="1"/><rect x="283" y="183" width="1" height="5"/><rect x="302" y="187" width="1" height="1"/><rect x="322" y="186" width="1" height="2"/><rect x="341" y="187" width="1" height="1"/><rect x="361" y="183" width="1" height="5"/><rect x="380" y="187" width="1" height="1"/><rect x="400" y="186" width="1" height="2"/><rect x="419" y="187" width="1" height="1"/><rect x="438" y="183" width="1" height="5"/><rect x="458" y="187" width="1" height="1"/><rect x="477" y="186" width="1" height="2"/><rect x="497" y="187" width="1" height="1"/><rect x="516" y="183" width="1" height="5"/><rect x="536" y="187" width="1" height="1"/><rect x="555" y="186" width="1" height="2"/><rect x="575" y="187" width="1" height="1"/><rect x="594" y="183" width="1" height="5"/><rect x="613" y="187" width="1" height="1"/><rect x="633" y="186" width="1" height="2"/><rect x="652" y="187" width="1" height="1"/><rect x="672" y="183" width="1" height="5"/><rect x="691" y="187" width="1" height="1"/><rect x="711" y="186" width="1" height="2"/><rect x="730" y="187" width="1" height="1"/><rect x="750" y="183" width="1" height="5"/><rect x="769" y="187" width="1" height="1"/><rect x="788" y="186" width="1" height="2"/><rect x="808" y="187" width="1" height="1"/><rect x="827" y="183" width="1" height="5"/><rect x="847" y="187" width="1" height="1"/><rect x="866" y="186" width="1" height="2"/><rect x="886" y="187" width="1" height="1"/><rect x="905" y="183" width="1" height="5"/><rect x="924" y="187" width="1" height="1"/><rect x="944" y="186" width="1" height="2"/><rect x="963" y="187" width="1" height="1"/><rect x="983" y="183" width="1" height="5"/><rect x="1002" y="187" width="1" height="1"/><rect x="1022" y="186" width="1" height="2"/><rect x="1041" y="187" width="1" height="1"/><rect x="1060" y="183" width="1" height="5"/><rect x="1080" y="187" width="1" height="1"/><rect x="1099" y="186" width="1" height="2"/><rect x="1119" y="187" width="1" height="1"/><rect x="1138" y="183" width="1" height="5"/><rect x="1158" y="187" width="1" height="1"/><rect x="1177" y="186" width="1" height="2"/><rect x="1197" y="187" width="1" height="1"/><rect x="57" y="781" width="2" height="1"/><rect x="58" y="762" width="1" height="1"/><rect x="54" y="742" width="5" height="1"/><rect x="58" y="723" width="1" height="1"/><rect x="57" y="703" width="2" height="1"/><rect x="58" y="684" width="1" height="1"/><rect x="54" y="664" width="5" height="1"/><rect x="58" y="645" width="1" height="1"/><rect x="57" y="626" width="2" height="1"/><rect x="58" y="606" width="1" height="1"/><rect x="54" y="587" width="5" height="1"/><rect x="58" y="567" width="1" height="1"/><rect x="57" y="548" width="2" height="1"/><rect x="58" y="528" width="1" height="1"/><rect x="54" y="509" width="5" height="1"/><rect x="58" y="490" width="1" height="1"/><rect x="57" y="470" width="2" height="1"/><rect x="58" y="451" width="1" height="1"/><rect x="54" y="431" width="5" height="1"/><rect x="58" y="412" width="1" height="1"/><rect x="57" y="392" width="2" height="1"/><rect x="58" y="373" width="1" height="1"/><rect x="54" y="354" width="5" height="1"/><rect x="58" y="334" width="1" height="1"/><rect x="57" y="315" width="2" height="1"/><rect x="58" y="295" width="1" height="1"/><rect x="54" y="276" width="5" height="1"/><rect x="58" y="256" width="1" height="1"/><rect x="57" y="237" width="2" height="1"/><rect x="58" y="217" width="1" height="1"/><rect x="54" y="198" width="5" height="1"/></g>
<g fill="#7d7d7d" font-family="Liberation Sans" font-size="9.6"><text x="127.5" y="182" text-anchor="middle">5</text><text x="203.4" y="182">1/2</text><text x="197.2" y="182" text-anchor="end">5</text><text x="283.0" y="182" text-anchor="middle">6</text><text x="358.9" y="182">1/2</text><text x="352.8" y="182" text-anchor="end">6</text><text x="438.5" y="182" text-anchor="middle">7</text><text x="514.5" y="182">1/2</text><text x="508.2" y="182" text-anchor="end">7</text><text x="594.0" y="182" text-anchor="middle">8</text><text x="670.0" y="182">1/2</text><text x="663.8" y="182" text-anchor="end">8</text><text x="749.5" y="182" text-anchor="middle">9</text><text x="825.5" y="182">1/2</text><text x="819.2" y="182" text-anchor="end">9</text><text x="905.0" y="182" text-anchor="middle">10</text><text x="981.0" y="182">1/2</text><text x="974.8" y="182" text-anchor="end">10</text><text x="1060.5" y="182" text-anchor="middle">11</text><text x="1136.5" y="182">1/2</text><text x="1130.2" y="182" text-anchor="end">11</text><text transform="translate(52.3,664.5) rotate(-90)" text-anchor="middle">5</text><text transform="translate(52.3,588.2) rotate(-90)">1/2</text><text transform="translate(52.3,594.8) rotate(-90)" text-anchor="end">5</text><text transform="translate(52.3,509.0) rotate(-90)" text-anchor="middle">6</text><text transform="translate(52.3,432.8) rotate(-90)">1/2</text><text transform="translate(52.3,439.2) rotate(-90)" text-anchor="end">6</text><text transform="translate(52.3,353.5) rotate(-90)" text-anchor="middle">7</text><text transform="translate(52.3,277.2) rotate(-90)">1/2</text><text transform="translate(52.3,283.8) rotate(-90)" text-anchor="end">7</text><text transform="translate(52.3,198.0) rotate(-90)" text-anchor="middle">8</text><text x="1169" y="182" textLength="28" lengthAdjust="spacingAndGlyphs">inches</text><text transform="translate(52.3,790.5) rotate(-90)" textLength="29.5" lengthAdjust="spacingAndGlyphs">inches</text></g></svg>
<svg width="1261" height="891" style="left:0;top:0" viewBox="0 0 1261 891"><path d="M1211.5,155.5 L1221,165 M1221,155.5 L1211.5,165" stroke="#a8a8a8" stroke-width="1.8"/>
<path d="M1208,181.7 V195.5 L1211,192.6 L1213.5,197.5 L1215.6,196.5 L1213.2,191.6 L1216.4,191.4 Z" fill="#333"/>
<text x="1216.5" y="189.8" font-family="Liberation Sans" font-size="12" fill="#333">?</text>
<g transform="translate(0,1)"><path d="M1216,267.8 L1223.4,272.5 L1216,277.2 L1208.8,272.5 Z" fill="none" stroke="#333" stroke-width="1.2"/><path d="M1210.5,275.5 L1208.8,276.8 L1216,281.8 L1223.4,276.8 L1221.5,275.5" fill="none" stroke="#333" stroke-width="1.2"/><path d="M1212,275.8 L1216,278.2 L1220,275.8 L1216,273.5 Z" fill="#333"/></g>
<path d="M1215.2,383 A4.3,4.3 0 1 1 1208.5,382" fill="none" stroke="#333" stroke-width="1.3"/><path d="M1206.8,379.5 L1210.8,380.2 L1208.2,383.5 Z" fill="#333"/><path d="M1220,375.5 V383 M1216.3,379.2 H1223.7" stroke="#333" stroke-width="1"/><path d="M1220,374.5 L1221.5,376.5 H1218.5 Z M1220,384 L1221.5,382 H1218.5 Z M1215.3,379.2 L1217.3,377.7 V380.7 Z M1224.7,379.2 L1222.7,377.7 V380.7 Z" fill="#333"/>
<path d="M1208.2,501.6 L1211.5,494 L1214.8,501.6 M1209.5,498.8 H1213.5" fill="none" stroke="#333" stroke-width="1.1"/>
<path d="M1224.10,505.33 L1224.10,507.07 L1222.87,507.33 L1222.89,507.29 L1223.58,508.34 L1222.34,509.58 L1221.29,508.89 L1221.33,508.87 L1221.07,510.10 L1219.33,510.10 L1219.07,508.87 L1219.11,508.89 L1218.06,509.58 L1216.82,508.34 L1217.51,507.29 L1217.53,507.33 L1216.30,507.07 L1216.30,505.33 L1217.53,505.07 L1217.51,505.11 L1216.82,504.06 L1218.06,502.82 L1219.11,503.51 L1219.07,503.53 L1219.33,502.30 L1221.07,502.30 L1221.33,503.53 L1221.29,503.51 L1222.34,502.82 L1223.58,504.06 L1222.89,505.11 L1222.87,505.07Z M1221.5,506.2 A1.3,1.3 0 1 0 1218.9,506.2 A1.3,1.3 0 1 0 1221.5,506.2Z" fill="#333" fill-rule="evenodd"/>
<path d="M1208,589 C1211,583 1214,580.5 1217.5,580.5 C1220,580.5 1222,584 1224,590" fill="none" stroke="#333" stroke-width="1.2"/><circle cx="1210.8" cy="585.8" r="2.1" fill="#2a9df4"/><circle cx="1217.9" cy="581.6" r="2.1" fill="#ff6a00"/><circle cx="1221.1" cy="585.8" r="2.1" fill="#1a9a3a"/>
<g fill="none" stroke="#333" stroke-width="1.2"><rect x="1208.8" y="724.5" width="15" height="15"/><rect x="1211" y="726.7" width="10.6" height="10.6"/><rect x="1213.2" y="728.9" width="6.2" height="6.2"/></g>
<g fill="none" stroke="#333" stroke-width="1.2"><path d="M1208.8,753.5 L1215,750.2 L1223.5,754 V762 L1217,765.5 L1208.8,761.8 Z M1208.8,753.5 L1217,757.5 L1223.5,754 M1217,757.5 V765.5 M1215,750.2 V758.5 M1208.8,761.8 L1215,758.5 L1223.5,762"/></g>
<g fill="none" stroke="#333" stroke-width="1.2"><path d="M1208.6,776 H1217 L1223.5,782.5 V791.5 H1214.8 L1208.6,785.3 Z M1208.6,785.3 H1214.8 V791.5 M1214.8,785.3 L1217,782.5 H1223.5 M1217,776 V782.5"/></g>
<path d="M1216,803 V816 M1209.5,809.5 H1222.5" stroke="#a8a8a8" stroke-width="2.4"/>
<g fill="#9a9a9a"><rect x="1232" y="149" width="1" height="1"/><rect x="1236" y="149" width="1" height="1"/><rect x="1240" y="149" width="1" height="1"/><rect x="1244" y="149" width="1" height="1"/><rect x="1248" y="149" width="1" height="1"/><rect x="1234" y="151" width="1" height="1"/><rect x="1238" y="151" width="1" height="1"/><rect x="1242" y="151" width="1" height="1"/><rect x="1246" y="151" width="1" height="1"/><rect x="1250" y="151" width="1" height="1"/><rect x="1232" y="153" width="1" height="1"/><rect x="1236" y="153" width="1" height="1"/><rect x="1240" y="153" width="1" height="1"/><rect x="1244" y="153" width="1" height="1"/><rect x="1248" y="153" width="1" height="1"/></g>
<path d="M1240,161.2 L1245,166.1 L1240,171 Z" fill="#555"/>
<g transform="translate(1235,196.5) rotate(-42)"><rect x="0" y="-1.5" width="14" height="3" rx="1.2" fill="#f3f3f3" stroke="#b4b4b4" stroke-width="1.4"/><rect x="13" y="-3.3" width="4" height="6.6" fill="#b4b4b4"/><rect x="16" y="-2.5" width="4" height="5" rx="1.2" fill="#b4b4b4"/></g>
<path d="M1236.5,214 L1242,208 L1247.5,214" fill="none" stroke="#c2c2c2" stroke-width="2"/>
<rect x="1231" y="223" width="22.5" height="575.5" fill="#555"/>
<rect x="1232" y="224" width="20.5" height="20" fill="#fff"/>
<rect x="1232" y="245" width="20.5" height="20" fill="#000"/>
<rect x="1232" y="266" width="20.5" height="20" fill="#1a1a1a"/>
<rect x="1232" y="287" width="20.5" height="20" fill="#333"/>
<rect x="1232" y="308" width="20.5" height="20" fill="#4d4d4d"/>
<rect x="1232" y="329" width="20.5" height="20" fill="#666"/>
<rect x="1232" y="350" width="20.5" height="20" fill="#808080"/>
<rect x="1232" y="371" width="20.5" height="20" fill="#999"/>
<rect x="1232" y="392" width="20.5" height="20" fill="#b3b3b3"/>
<rect x="1232" y="413" width="20.5" height="20" fill="#ccc"/>
<rect x="1232" y="434" width="20.5" height="20" fill="#e5e5e5"/>
<rect x="1232" y="455" width="20.5" height="20" fill="#fff"/>
<rect x="1232" y="476" width="20.5" height="20" fill="#00f"/>
<rect x="1232" y="497" width="20.5" height="20" fill="#0ff"/>
<rect x="1232" y="518" width="20.5" height="20" fill="#0f0"/>
<rect x="1232" y="539" width="20.5" height="20" fill="#ff0"/>
<rect x="1232" y="560" width="20.5" height="20" fill="#f00"/>
<rect x="1232" y="581" width="20.5" height="20" fill="#f0f"/>
<rect x="1232" y="602" width="20.5" height="20" fill="#90c"/>
<rect x="1232" y="623" width="20.5" height="20" fill="#f60"/>
<rect x="1232" y="644" width="20.5" height="20" fill="#f9c"/>
<rect x="1232" y="665" width="20.5" height="20" fill="#633"/>
<rect x="1232" y="686" width="20.5" height="20" fill="#ccf"/>
<rect x="1232" y="707" width="20.5" height="20" fill="#99f"/>
<rect x="1232" y="728" width="20.5" height="20" fill="#69f"/>
<rect x="1232" y="749" width="20.5" height="20" fill="#66f"/>
<rect x="1232" y="770" width="20.5" height="20" fill="#66c"/>
<rect x="1232" y="791" width="20.5" height="7.5" fill="#039"/>
<path d="M1235.5,241 L1249,227" stroke="#f22" stroke-width="1.3"/>
<path d="M1237,804.5 L1242.5,810 L1248,804.5" fill="none" stroke="#b8b8b8" stroke-width="1.8"/>
<path d="M1237,826.5 L1241,830.5 L1237,834.5 M1243,826.5 L1247,830.5 L1243,834.5" fill="none" stroke="#b0b0b0" stroke-width="1.4"/></svg>
<svg width="1261" height="891" style="left:0;top:0" viewBox="0 0 1261 891"><path d="M56.6,803.4 V814.3 M51.2,808.8 H62" stroke="#333" stroke-width="1.8"/>
<rect x="77.8" y="803.4" width="1.7" height="10.9" fill="#333"/><path d="M89.3,803.4 V814.3 L80.5,808.8 Z" fill="#333"/>
<path d="M115.2,803.6 V814 L106,808.8 Z" fill="#333"/>
<path d="M201.3,803.6 V814 L209.7,808.8 Z" fill="#b4b4b4"/><path d="M227.4,803.6 V814 L235.2,808.8 Z" fill="#b4b4b4"/><rect x="236.5" y="803.4" width="1.6" height="10.9" fill="#b4b4b4"/>
<path d="M259.6,803.2 V814.5 M254,808.8 H265.3" stroke="#333" stroke-width="1.8"/>
<g fill="#a8a8a8"><rect x="45" y="826" width="1" height="1"/><rect x="48" y="827.5" width="1" height="1"/><rect x="45" y="829" width="1" height="1"/><rect x="48" y="830.5" width="1" height="1"/><rect x="45" y="832" width="1" height="1"/><rect x="48" y="833.5" width="1" height="1"/><rect x="45" y="835" width="1" height="1"/><rect x="48" y="836.5" width="1" height="1"/><rect x="45" y="838" width="1" height="1"/><rect x="48" y="839.5" width="1" height="1"/><rect x="45" y="841" width="1" height="1"/><rect x="48" y="842.5" width="1" height="1"/><rect x="45" y="844" width="1" height="1"/><rect x="48" y="845.5" width="1" height="1"/></g>
<path d="M60,831 L64,835 L60,839 Z" fill="#555"/>
<g transform="translate(79.5,843.5) rotate(-45)"><rect x="0" y="-1.6" width="14" height="3.2" rx="1" fill="#fff" stroke="#333" stroke-width="1.2"/><rect x="0" y="-1.6" width="6.5" height="3.2" rx="1" fill="#ff6a00" stroke="#333" stroke-width="0.9"/><rect x="13" y="-3.3" width="4" height="6.6" fill="#333"/><rect x="16" y="-2.6" width="4.5" height="5.2" rx="1.2" fill="#333"/></g>
<path d="M111,830 L106,835 L111,840" fill="none" stroke="#c0c0c0" stroke-width="2"/>
<rect x="119" y="825.4" width="84.7" height="21.2" fill="#555"/><rect x="120" y="826.4" width="20" height="19.2" fill="#fff"/><rect x="141" y="826.4" width="20" height="19.2" fill="#000"/><rect x="162" y="826.4" width="20" height="19.2" fill="#00f"/><rect x="183" y="826.4" width="19.7" height="19.2" fill="#f00"/>
<path d="M123,843 L137.5,828.5" stroke="#f22" stroke-width="1.2"/>
<path d="M1156,829 L1161.5,835 L1156,841" fill="none" stroke="#c0c0c0" stroke-width="1.6"/><path d="M1177,831 L1181,835 L1177,839 M1183,831 L1187,835 L1183,839" fill="none" stroke="#b0b0b0" stroke-width="1.4"/>
<circle cx="1186.5" cy="782.8" r="5" fill="none" stroke="#333" stroke-width="1.1"/><path d="M1190.2,786.5 L1194,790.3" stroke="#333" stroke-width="1.8"/><g fill="#333"><circle cx="1186.5" cy="780.6" r="0.8"/><circle cx="1186.5" cy="785" r="0.8"/><circle cx="1184.3" cy="782.8" r="0.8"/><circle cx="1188.7" cy="782.8" r="0.8"/></g>
<path d="M37.46,866.64 L37.46,870.96 L34.43,871.60 L34.47,871.51 L36.16,874.10 L33.10,877.16 L30.51,875.47 L30.60,875.43 L29.96,878.46 L25.64,878.46 L25.00,875.43 L25.09,875.47 L22.50,877.16 L19.44,874.10 L21.13,871.51 L21.17,871.60 L18.14,870.96 L18.14,866.64 L21.17,866.00 L21.13,866.09 L19.44,863.50 L22.50,860.44 L25.09,862.13 L25.00,862.17 L25.64,859.14 L29.96,859.14 L30.60,862.17 L30.51,862.13 L33.10,860.44 L36.16,863.50 L34.47,866.09 L34.43,866.00Z M32.0,868.8 A4.2,4.2 0 1 0 23.6,868.8 A4.2,4.2 0 1 0 32.0,868.8Z" fill="#333" fill-rule="evenodd"/>
<path d="M40.9,876.2 V881.7 H35.4 Z" fill="#8a8a8a"/>
<path d="M873.4,859.8 L883,869 L873.4,878 L864.6,869.2 Z" fill="none" stroke="#333" stroke-width="1.5"/><path d="M873.4,859.3 L883.5,869 L881,871.5 L871.2,861.6 Z" fill="#333"/><path d="M868.9,870.2 H878 L873.5,874.2 Z" fill="#f00"/><path d="M884,871 V879 H878.8 Z" fill="#f00"/>
<rect x="887.9" y="856.9" width="24.3" height="24.3" fill="#fff" stroke="#a6a6a6" stroke-width="1.2"/><path d="M888.8,880.5 L911.5,857.5" stroke="#c80000" stroke-width="2"/>
<path d="M1126.3,859.5 L1131.4,869.5 L1129.6,873 H1123 L1121.2,869.5 Z" fill="#fff" stroke="#333" stroke-width="1.2"/><path d="M1126.3,860 V867.5" stroke="#333" stroke-width="0.9"/><circle cx="1126.3" cy="868" r="0.9" fill="#333"/><rect x="1123.3" y="873.3" width="6" height="5.2" fill="#fff" stroke="#333" stroke-width="1.2"/>
<rect x="1137.5" y="856.6" width="25.2" height="24.7" fill="#000" stroke="#555" stroke-width="1"/></svg>
<div class="t" style="left:570.6px;top:71.3px;font-size:12px;color:#000;">162%</div>
<div class="t" style="left:865.8px;top:71.2px;font-size:12.75px;color:#000;">Snap <span class="u">T</span>o</div>
<div class="t" style="left:1028px;top:70.7px;font-size:12.2px;color:#000;">Launch</div>
<div class="t" style="left:16.8px;top:114.5px;font-size:12.4px;color:#000;">Custom</div>
<div class="t" style="left:248.6px;top:107.4px;font-size:12.5px;color:#000;">18.0 "</div>
<div class="t" style="left:248.6px;top:125.4px;font-size:12.5px;color:#000;">12.0 "</div>
<div class="t" style="left:580.2px;top:114.3px;font-size:12.1px;color:#000;">Units:</div>
<div class="t" style="left:619.3px;top:114.3px;font-size:12.1px;color:#000;">inches</div>
<div class="t" style="left:784.5px;top:114.9px;font-size:12.5px;color:#000;">0.01 "</div>
<div class="t" style="left:916.5px;top:107.4px;font-size:12.5px;color:#000;">4.25 "</div>
<div class="t" style="left:916.5px;top:125.4px;font-size:12.5px;color:#000;">0.0 "</div>
<div class="t" style="left:73.7px;top:154.1px;font-size:13.6px;color:#000;">lobster-dragonfly.cdr</div>
<div class="t" style="left:137.4px;top:803.0px;font-size:12.7px;color:#6b6b6b;">2 &nbsp;of&nbsp; 2</div>
<div class="t" style="left:315.4px;top:803.9px;font-size:12.2px;color:#000;">Page 1</div>
<div class="t" style="left:441.1px;top:803.9px;font-size:12.2px;color:#000;">Page 2</div>
<div class="t" style="left:47.7px;top:863.9px;font-size:13.07px;color:#000;">Next click for Drag/Scale; Second click for Rotate/Skew; Dbl-clicking tool selects all objects; Shift+click multi-selects; Alt+click digs</div>
<div class="t" style="left:917.6px;top:863.5px;font-size:12.8px;color:#000;">None</div>
<div class="a" style="left:1167px;top:860px;width:84px;height:20px;overflow:hidden"><div class="t" style="left:0.5px;top:3.5px;font-size:12.8px;color:#000;">Black (#000000)</div></div>
<svg width="1261" height="891" style="left:0;top:0" viewBox="0 0 1261 891"><g font-family="Liberation Sans" fill="#000"><text transform="translate(1210.6,206.5) rotate(90)" font-size="12.6" textLength="27.7" lengthAdjust="spacingAndGlyphs">Hints</text><text transform="translate(1210.6,294.4) rotate(90)" font-size="12.6" textLength="42.6" lengthAdjust="spacingAndGlyphs">Objects</text><text transform="translate(1210.6,401) rotate(90)" font-size="12.6" textLength="59.4" lengthAdjust="spacingAndGlyphs">Transform</text><text transform="translate(1210.6,519.7) rotate(90)" font-size="12.6" textLength="24.3" lengthAdjust="spacingAndGlyphs">Text</text><text transform="translate(1210.6,603.5) rotate(90)" font-size="12.6" textLength="84.5" lengthAdjust="spacingAndGlyphs">Fit Objects to...</text></g></svg>
</body></html>
